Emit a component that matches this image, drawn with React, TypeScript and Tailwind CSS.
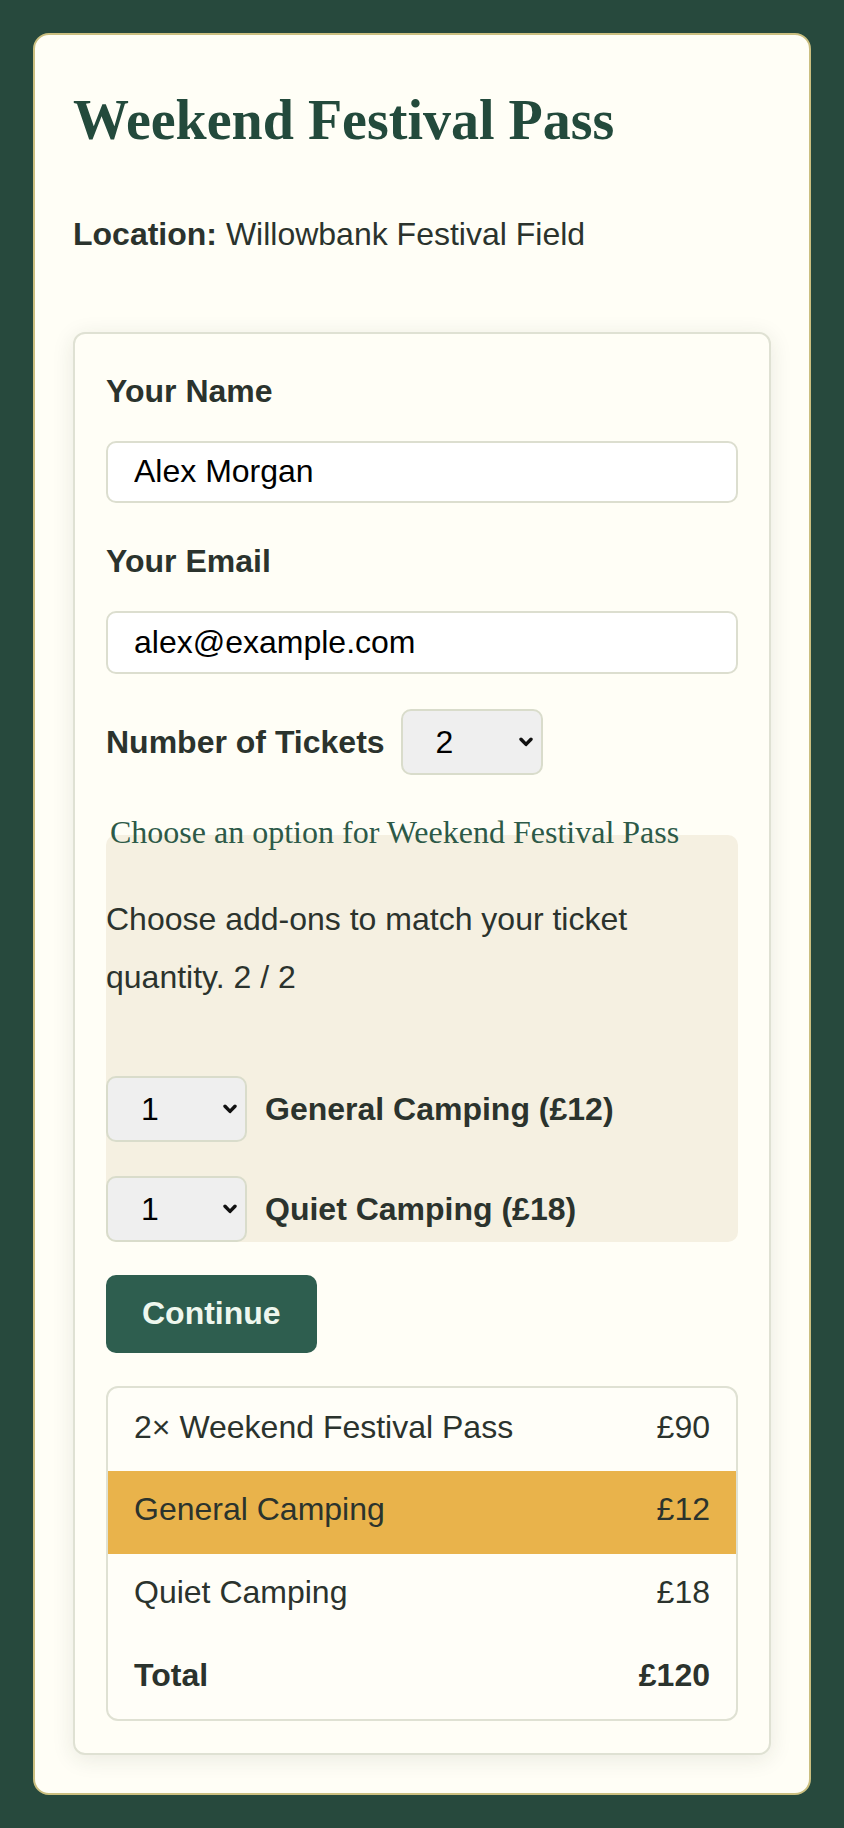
import { useState } from 'react';

const sans = { fontFamily: '"Liberation Sans", Arial, sans-serif' };
const serif = { fontFamily: '"Liberation Serif", "Times New Roman", serif' };

interface LineItem {
  label: string;
  price: string;
  highlight?: boolean;
  bold?: boolean;
}

const lines: LineItem[] = [
  { label: '2× Weekend Festival Pass', price: '£90' },
  { label: 'General Camping', price: '£12', highlight: true },
  { label: 'Quiet Camping', price: '£18' },
  { label: 'Total', price: '£120', bold: true },
];

function QtySelect({ value, onChange, wide }: { value: string; onChange: (v: string) => void; wide?: boolean }) {
  return (
    <div className={'relative shrink-0 ' + (wide ? 'w-[142px]' : 'w-[141px]')}>
      <select
        value={value}
        onChange={(e) => onChange(e.target.value)}
        className="block h-[66px] w-full appearance-none rounded-[10px] border-2 border-[#d9dccb] bg-[#efefef] pl-[33px] pr-[30px] text-[32px] text-black outline-none"
      >
        {['0', '1', '2', '3', '4'].map((n) => (
          <option key={n} value={n}>
            {n}
          </option>
        ))}
      </select>
      {/* native-looking chevron */}
      <svg
        className="pointer-events-none absolute top-1/2 right-[10px] h-[10px] w-[14px] -translate-y-1/2"
        viewBox="0 0 14 10"
        fill="none"
      >
        <path d="M2 2.2 L7 7.4 L12 2.2" stroke="#111" strokeWidth="3.4" strokeLinecap="round" strokeLinejoin="round" />
      </svg>
    </div>
  );
}

export default function App() {
  const [name, setName] = useState('Alex Morgan');
  const [email, setEmail] = useState('alex@example.com');
  const [tickets, setTickets] = useState('2');
  const [general, setGeneral] = useState('1');
  const [quiet, setQuiet] = useState('1');

  return (
    <div className="min-h-[1828px] bg-[#27493d] p-[33px] text-[#2b332d]" style={sans}>
      <div className="rounded-[16px] border-2 border-[#cbbf80] bg-[#fffef6] px-[38px] pt-[38px] pb-[38px]">
        <h1 className="mt-[15px] text-[56px] leading-[64px] font-bold text-[#234a3c]" style={serif}>
          Weekend Festival Pass
        </h1>
        <p className="mt-[54px] text-[32px] leading-[57.6px]">
          <strong className="font-bold">Location:</strong> Willowbank Festival Field
        </p>

        {/* booking form */}
        <div className="mt-[68px] rounded-[12px] border-2 border-[#dfe1d3] bg-[#fffef6] px-[31px] pt-[39px] pb-[32px] shadow-[0_4px_22px_rgba(40,50,30,0.10)]">
          <label className="block text-[32px] leading-[36px] font-bold">Your Name</label>
          <input
            value={name}
            onChange={(e) => setName(e.target.value)}
            className="mt-[32px] block h-[62px] w-full rounded-[10px] border-2 border-[#dcdecf] bg-white px-[26px] text-[32px] text-black outline-none"
          />

          <label className="mt-[40px] block text-[32px] leading-[36px] font-bold">Your Email</label>
          <input
            value={email}
            onChange={(e) => setEmail(e.target.value)}
            className="mt-[32px] block h-[63px] w-full rounded-[10px] border-2 border-[#dcdecf] bg-white px-[26px] text-[32px] text-black outline-none"
          />

          <div className="mt-[35px] flex items-center gap-[16px]">
            <label className="text-[32px] leading-[36px] font-bold">Number of Tickets</label>
            <QtySelect value={tickets} onChange={setTickets} wide />
          </div>

          <fieldset className="mt-[29px] rounded-[10px] bg-[#f5f0e1]">
            <legend className="px-[4px] pb-[6px] text-[32px] leading-[57.6px] text-[#2d5a48]" style={serif}>
              Choose an option for Weekend Festival Pass
            </legend>
            <p className="mt-[24px] text-[32px] leading-[57.6px]">
              Choose add-ons to match your ticket quantity. 2 / 2
            </p>
            <div className="mt-[70px] flex items-center gap-[18px]">
              <QtySelect value={general} onChange={setGeneral} />
              <span className="text-[32px] leading-[36px] font-bold">General Camping (£12)</span>
            </div>
            <div className="mt-[34px] flex items-center gap-[18px]">
              <QtySelect value={quiet} onChange={setQuiet} />
              <span className="text-[32px] leading-[36px] font-bold">Quiet Camping (£18)</span>
            </div>
          </fieldset>

          <button className="mt-[33px] rounded-[10px] bg-[#2e5e4f] px-[36px] py-[10px] text-[32px] leading-[57.6px] font-bold text-[#eef7ee]">
            Continue
          </button>

          <div className="mt-[33px] overflow-hidden rounded-[12px] border-2 border-[#dfe1d3] bg-[#fffef8]">
            {lines.map((l) => (
              <div
                key={l.label}
                className={
                  'flex justify-between px-[26px] pt-[10.6px] pb-[14.6px] text-[32px] leading-[57.6px] ' +
                  (l.highlight ? 'bg-[#e9b34b] ' : '') +
                  (l.bold ? 'font-bold' : '')
                }
              >
                <span>{l.label}</span>
                <span>{l.price}</span>
              </div>
            ))}
          </div>
        </div>
      </div>
    </div>
  );
}
